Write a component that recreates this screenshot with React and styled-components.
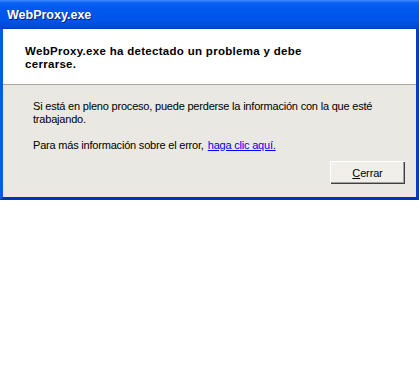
import React from 'react';
import styled, { createGlobalStyle } from 'styled-components';

const GlobalStyle = createGlobalStyle`
  html, body {
    margin: 0;
    padding: 0;
    background: #ffffff;
  }
  body {
    font-family: "Liberation Sans", Arial, sans-serif;
  }
`;

const face = '#e9e8e2';

const Window = styled.div`
  width: 419px;
  height: 200px;
  box-sizing: border-box;
  display: flex;
  flex-direction: column;
  background: #0055e5;
  border-left: 3px solid #0a5ae8;
  border-right: 3px solid #0040c8;
  border-bottom: 3px solid #0034b8;
`;

const TitleBar = styled.div`
  height: 29px;
  flex: none;
  margin: 0 -3px;
  padding-left: 7px;
  display: flex;
  align-items: center;
  background: linear-gradient(
    to bottom,
    #3d8bff 0px,
    #0a62f4 3px,
    #0058ee 8px,
    #0054e8 20px,
    #0048d8 27px,
    #003cc4 29px
  );
`;

const Title = styled.span`
  color: #ffffff;
  font-size: 12.5px;
  font-weight: bold;
  text-shadow: 1px 1px 0 #0a1e78;
  padding-top: 1px;
`;

const Header = styled.div`
  height: 56px;
  flex: none;
  background: #ffffff;
  padding: 16px 0 0 22px;
  box-sizing: border-box;
  border-bottom: 1px solid #aca899;
`;

const Heading = styled.div`
  width: 310px;
  color: #000000;
  font-size: 11.5px;
  font-weight: bold;
  line-height: 13px;
  letter-spacing: 0.3px;
`;

const Body = styled.div`
  flex: 1;
  background: ${face};
  padding: 15px 0 0 30px;
  display: flex;
  flex-direction: column;
`;

const Paragraph = styled.p`
  margin: 0 0 ${p => p.$gap || 0}px;
  width: 360px;
  font-size: 11px;
  line-height: 13px;
  letter-spacing: -0.2px;
  color: #000000;
`;

const Link = styled.a`
  color: #0000ff;
  text-decoration: underline;
  margin-left: 4px;
`;

const ButtonRow = styled.div`
  display: flex;
  justify-content: flex-end;
  padding-right: 11px;
  margin-top: 9px;
`;

const Button = styled.button`
  width: 75px;
  height: 23px;
  background: #f0efea;
  border: none;
  box-shadow: inset 1px 1px 0 #ffffff, inset -1px -1px 0 #404040,
    inset -2px -2px 0 #a0a0a0;
  font-family: "Liberation Sans", Arial, sans-serif;
  font-size: 11px;
  letter-spacing: -0.15px;
  color: #000000;
  padding: 0;
  cursor: default;

  u {
    text-decoration: underline;
  }
`;

export default function App() {
  return (
    <>
      <GlobalStyle />
      <Window>
        <TitleBar>
          <Title>WebProxy.exe</Title>
        </TitleBar>
        <Header>
          <Heading>WebProxy.exe ha detectado un problema y debe cerrarse.</Heading>
        </Header>
        <Body>
          <Paragraph $gap={13}>
            Si está en pleno proceso, puede perderse la información con la que esté trabajando.
          </Paragraph>
          <Paragraph>
            Para más información sobre el error,
            <Link href="#">haga clic aquí.</Link>
          </Paragraph>
          <ButtonRow>
            <Button>
              <u>C</u>errar
            </Button>
          </ButtonRow>
        </Body>
      </Window>
    </>
  );
}
